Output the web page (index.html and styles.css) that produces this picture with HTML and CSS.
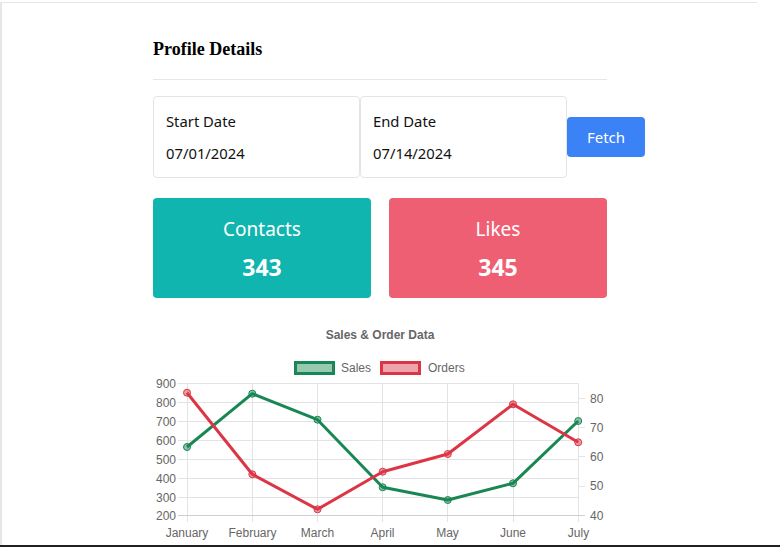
FILE: index.html
```html
<!DOCTYPE html>
<html>
<head>
<meta charset="utf-8">
<link rel="stylesheet" href="styles.css">
</head>
<body>
<div class="page">
  <div class="frame">
    <div class="content">
      <h3 class="title">Profile Details</h3>
      <div class="rule"></div>
      <div class="dates">
        <div class="date-box">
          <div class="date-label">Start Date</div>
          <div class="date-value">07/01/2024</div>
        </div>
        <div class="date-box">
          <div class="date-label">End Date</div>
          <div class="date-value">07/14/2024</div>
        </div>
        <button class="fetch">Fetch</button>
      </div>
      <div class="cards">
        <div class="card card-teal">
          <div class="card-title">Contacts</div>
          <div class="card-num">343</div>
        </div>
        <div class="card card-pink">
          <div class="card-title">Likes</div>
          <div class="card-num">345</div>
        </div>
      </div>
      <svg class="chart" width="454" height="227" viewBox="153 318 454 227" xmlns="http://www.w3.org/2000/svg">
        <text x="380" y="338.5" class="c-title" text-anchor="middle">Sales &amp; Order Data</text>
        <rect x="295.5" y="362.5" width="38" height="11" fill="rgba(25,135,84,0.45)" stroke="#198754" stroke-width="3"/>
        <text x="341" y="372" class="c-lbl">Sales</text>
        <rect x="381.5" y="362.5" width="38" height="11" fill="rgba(220,53,69,0.45)" stroke="#dc3545" stroke-width="3"/>
        <text x="428" y="372" class="c-lbl">Orders</text>
        <g stroke="#e3e3e3" stroke-width="1">
          <line x1="178" y1="383.5" x2="578" y2="383.5"/>
          <line x1="178" y1="402.5" x2="578" y2="402.5"/>
          <line x1="178" y1="421.5" x2="578" y2="421.5"/>
          <line x1="178" y1="440.5" x2="578" y2="440.5"/>
          <line x1="178" y1="459.5" x2="578" y2="459.5"/>
          <line x1="178" y1="478.5" x2="578" y2="478.5"/>
          <line x1="178" y1="497.5" x2="578" y2="497.5"/>
          <line x1="187.5" y1="383" x2="187.5" y2="522"/>
          <line x1="252.5" y1="383" x2="252.5" y2="522"/>
          <line x1="317.5" y1="383" x2="317.5" y2="522"/>
          <line x1="382.5" y1="383" x2="382.5" y2="522"/>
          <line x1="447.5" y1="383" x2="447.5" y2="522"/>
          <line x1="513.5" y1="383" x2="513.5" y2="522"/>
          <line x1="578.5" y1="383" x2="578.5" y2="522"/>
          <line x1="578" y1="398.5" x2="585" y2="398.5"/>
          <line x1="578" y1="427.5" x2="585" y2="427.5"/>
          <line x1="578" y1="456.5" x2="585" y2="456.5"/>
          <line x1="578" y1="486.5" x2="585" y2="486.5"/>
        </g>
        <line x1="178" y1="515.5" x2="585" y2="515.5" stroke="#cfcfcf" stroke-width="1"/>
        <g class="c-lbl" text-anchor="end">
          <text x="176" y="387.5">900</text>
          <text x="176" y="406.5">800</text>
          <text x="176" y="425.5">700</text>
          <text x="176" y="444.5">600</text>
          <text x="176" y="463.5">500</text>
          <text x="176" y="482.5">400</text>
          <text x="176" y="501.5">300</text>
          <text x="176" y="520">200</text>
        </g>
        <g class="c-lbl">
          <text x="590" y="402.5">80</text>
          <text x="590" y="431.5">70</text>
          <text x="590" y="460.5">60</text>
          <text x="590" y="490">50</text>
          <text x="590" y="519.5">40</text>
        </g>
        <g class="c-lbl" text-anchor="middle">
          <text x="187" y="536.5">January</text>
          <text x="252.5" y="536.5">February</text>
          <text x="317.5" y="536.5">March</text>
          <text x="382.5" y="536.5">April</text>
          <text x="447.5" y="536.5">May</text>
          <text x="513" y="536.5">June</text>
          <text x="578.5" y="536.5">July</text>
        </g>
        <polyline fill="none" stroke="#198754" stroke-width="3" stroke-linejoin="round" points="187,447 252.3,393.7 317.5,419.7 382.7,487.3 447.8,500 513,483.3 578.2,421"/>
        <polyline fill="none" stroke="#dc3545" stroke-width="3" stroke-linejoin="round" points="187,392.7 252.3,474.3 317.5,509.3 382.7,471.7 447.8,454 513,404.3 578.2,442.3"/>
        <g fill="rgba(25,135,84,0.5)" stroke="#198754" stroke-width="1">
          <circle cx="187" cy="447" r="3.5"/>
          <circle cx="252.3" cy="393.7" r="3.5"/>
          <circle cx="317.5" cy="419.7" r="3.5"/>
          <circle cx="382.7" cy="487.3" r="3.5"/>
          <circle cx="447.8" cy="500" r="3.5"/>
          <circle cx="513" cy="483.3" r="3.5"/>
          <circle cx="578.2" cy="421" r="3.5"/>
        </g>
        <g fill="rgba(220,53,69,0.5)" stroke="#dc3545" stroke-width="1">
          <circle cx="187" cy="392.7" r="3.5"/>
          <circle cx="252.3" cy="474.3" r="3.5"/>
          <circle cx="317.5" cy="509.3" r="3.5"/>
          <circle cx="382.7" cy="471.7" r="3.5"/>
          <circle cx="447.8" cy="454" r="3.5"/>
          <circle cx="513" cy="404.3" r="3.5"/>
          <circle cx="578.2" cy="442.3" r="3.5"/>
        </g>
      </svg>
    </div>
  </div>
  <div class="taskbar"></div>
</div>
</body>
</html>
```

FILE: styles.css
```css
html, body {
  margin: 0;
  padding: 0;
  background: #ffffff;
}
.page {
  height: 547px;
  display: flex;
  flex-direction: column;
  overflow: hidden;
}
.frame {
  margin-top: 2px;
  width: 755px;
  flex: 1;
  min-height: 0;
  border-top: 1px solid #e6e6e6;
  border-left: 2px solid #e6e6e6;
  overflow: hidden;
}
.content {
  width: 454px;
  margin-left: 151px;
  padding-top: 35px;
  font-family: "Noto Sans", "Open Sans", sans-serif;
  color: #111;
}
.title {
  font-family: "Liberation Serif", "Times New Roman", serif;
  font-size: 18px;
  font-weight: bold;
  line-height: 22px;
  margin: 0;
  color: #000;
}
.rule {
  margin-top: 19px;
  height: 1px;
  background: #e5e7eb;
}
.dates {
  margin-top: 16px;
  display: flex;
  align-items: center;
}
.date-box {
  box-sizing: border-box;
  flex: 0 0 207px;
  height: 82px;
  border: 1px solid #e3e4e8;
  border-radius: 4px;
  padding: 12px 12px 0;
  font-size: 14.8px;
}
.date-label,
.date-value {
  line-height: 24px;
}
.date-value {
  margin-top: 8px;
}
.fetch {
  flex: 0 0 78px;
  height: 40px;
  border: none;
  border-radius: 4px;
  background: #3b82f6;
  color: #fff;
  font-family: "Noto Sans", "Open Sans", sans-serif;
  font-size: 15px;
  padding: 0;
}
.cards {
  margin-top: 20px;
  display: flex;
  gap: 18px;
}
.card {
  box-sizing: border-box;
  height: 100px;
  border-radius: 4px;
  color: #fff;
  text-align: center;
  padding-top: 17px;
}
.card-teal {
  width: 218px;
  background: #0fb5ae;
}
.card-pink {
  width: 218px;
  background: #ef5f73;
}
.card-title {
  font-size: 19px;
  line-height: 28px;
}
.card-num {
  font-size: 23px;
  font-weight: bold;
  line-height: 30px;
  margin-top: 9px;
}
.chart {
  display: block;
  margin-top: 20px;
}
.c-title {
  font-family: "Liberation Sans", Arial, sans-serif;
  font-size: 12px;
  font-weight: bold;
  fill: #666;
}
.c-lbl {
  font-family: "Liberation Sans", Arial, sans-serif;
  font-size: 12px;
  fill: #666;
}
.taskbar {
  height: 2px;
  background: #202124;
}
```
